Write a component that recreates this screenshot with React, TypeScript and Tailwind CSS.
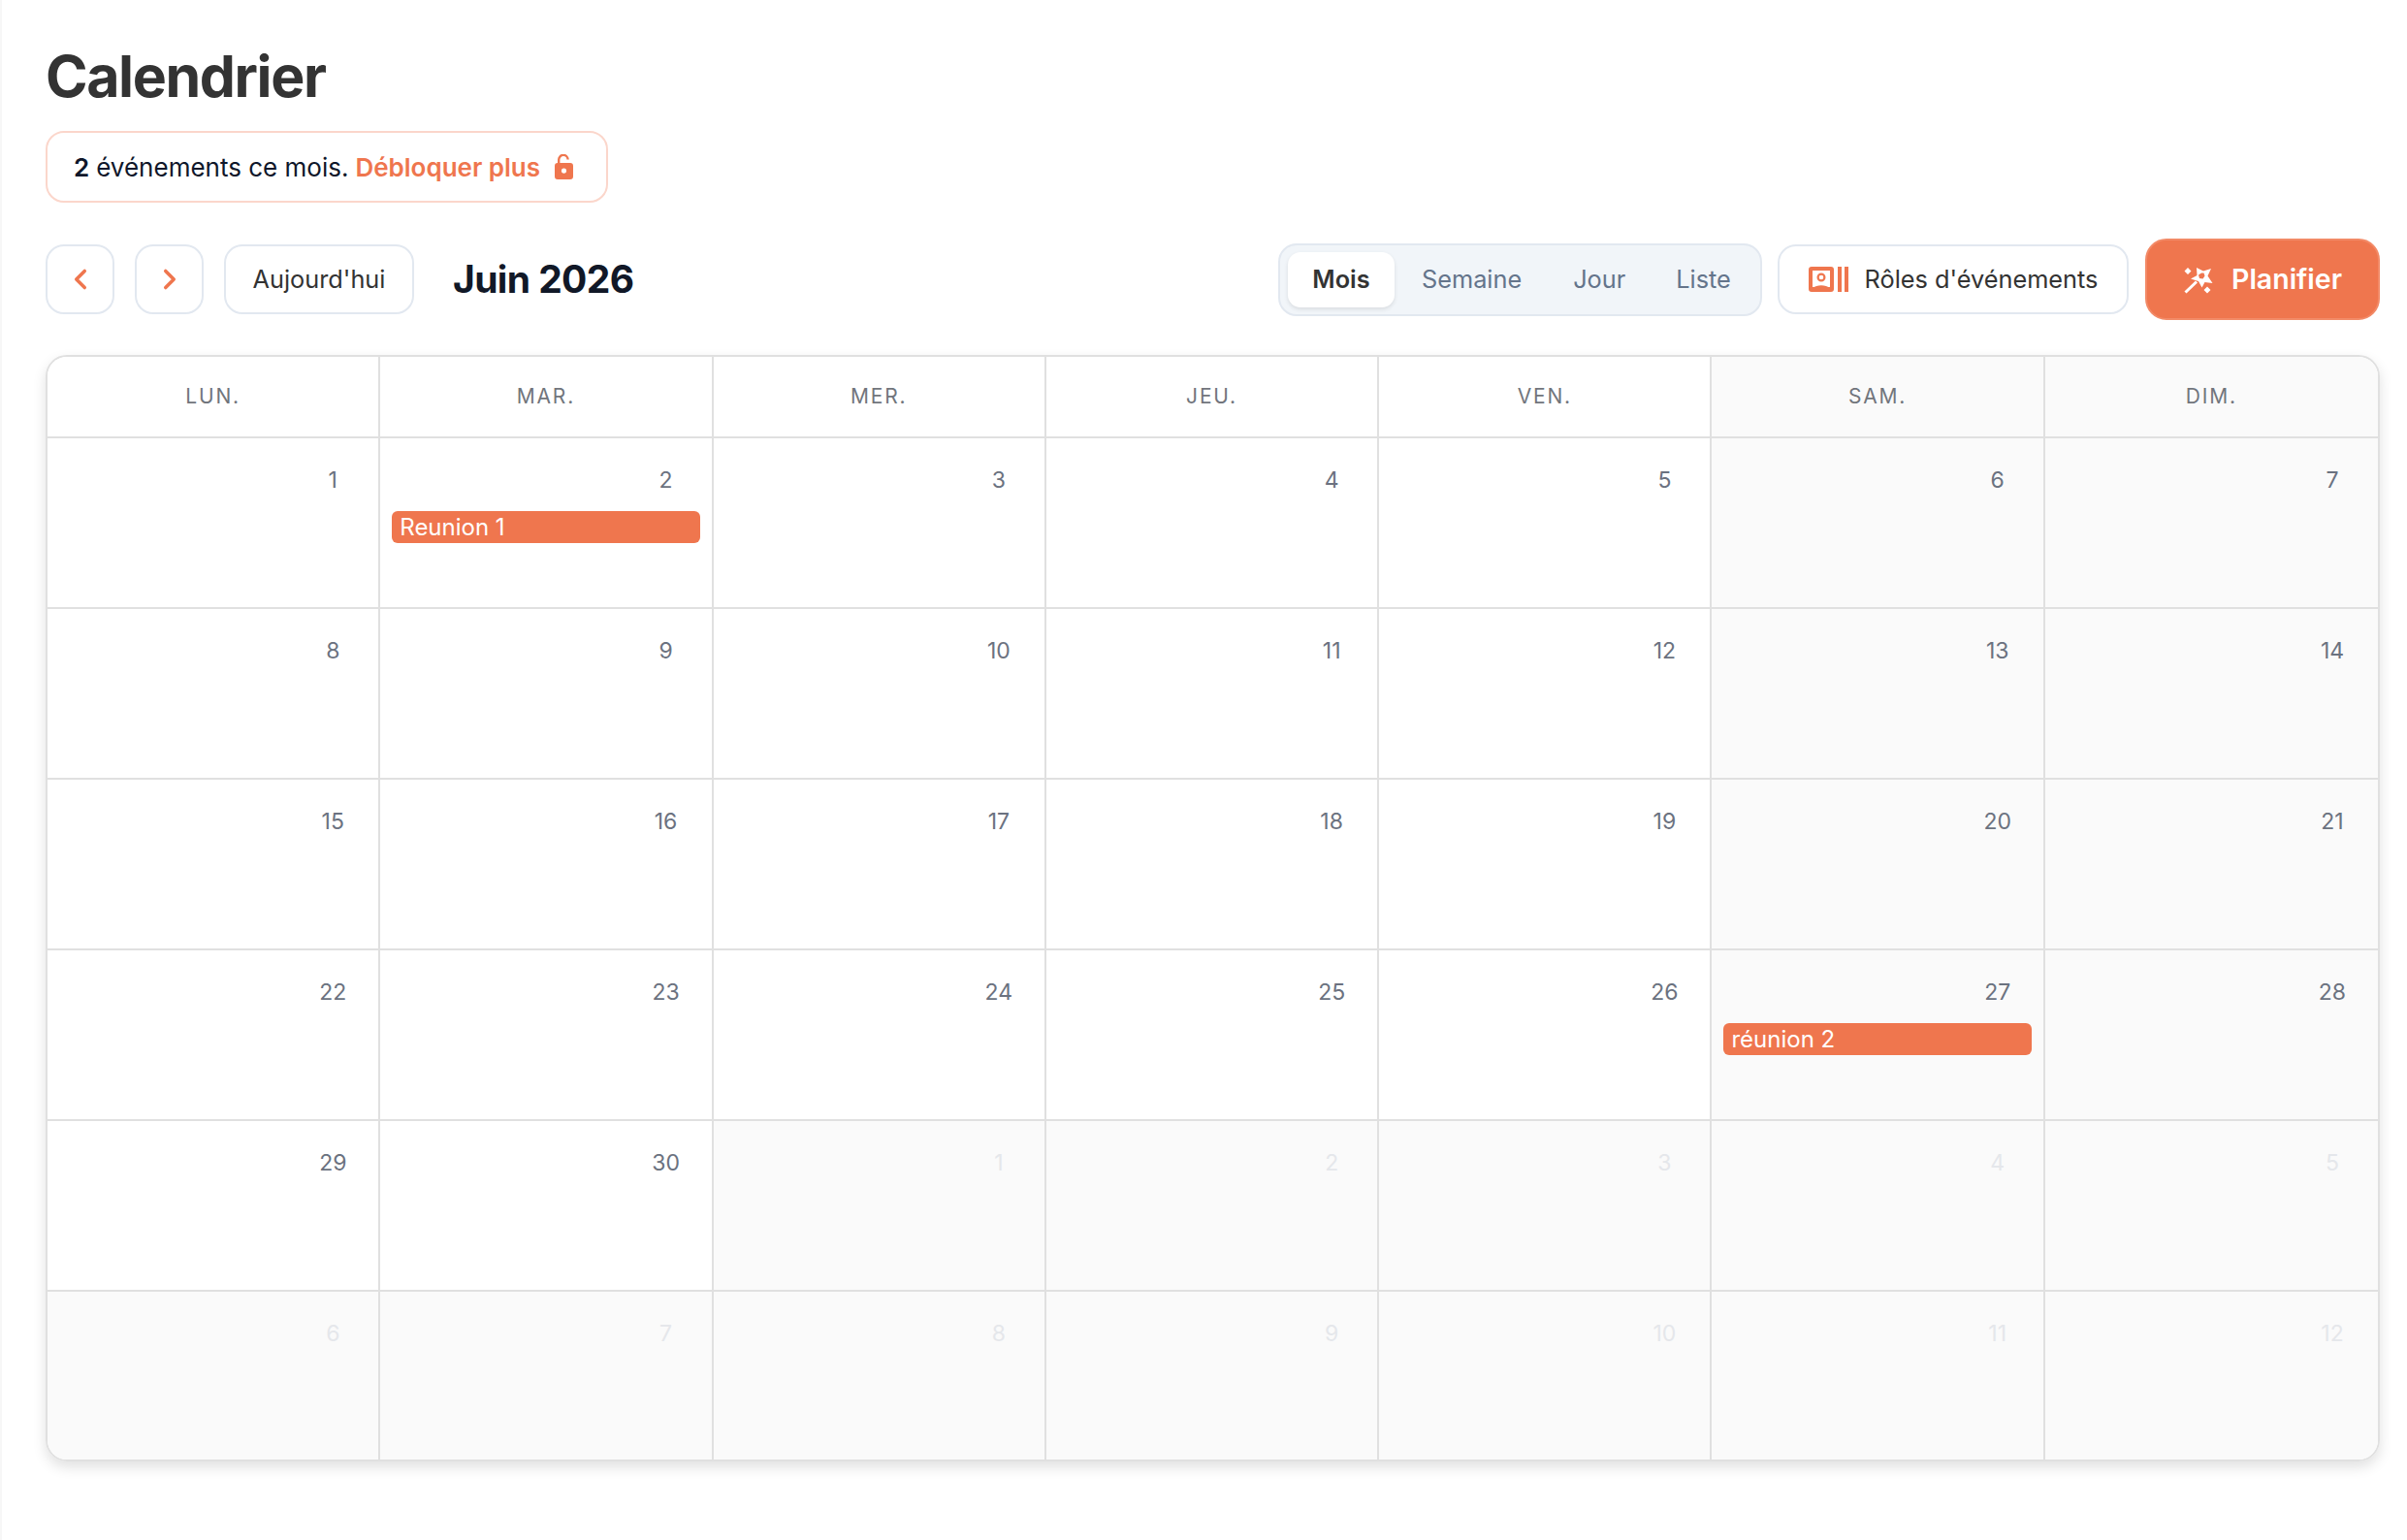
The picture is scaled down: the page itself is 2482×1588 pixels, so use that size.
import { LuChevronLeft, LuChevronRight } from "react-icons/lu";

const headers = ["LUN.", "MAR.", "MER.", "JEU.", "VEN.", "SAM.", "DIM."];
type Cell = { d: number; other?: boolean; ev?: string };
const cells: Cell[] = [
  ...Array.from({ length: 30 }, (_, i) => ({ d: i + 1 } as Cell)),
  ...Array.from({ length: 12 }, (_, i) => ({ d: i + 1, other: true } as Cell)),
];
cells[1].ev = "Reunion 1";
cells[26].ev = "réunion 2";

function LockOpenIcon() {
  return (
    <svg width="19" height="26" viewBox="0 0 19 26" className="ml-[15px] shrink-0">
      <path d="M4.2 10V5.6a4.7 4.7 0 0 1 9.4 0" fill="none" stroke="#ef764e" strokeWidth="2.4" />
      <path
        fillRule="evenodd"
        fill="#ef764e"
        d="M3 9h13a3 3 0 0 1 3 3v11a3 3 0 0 1-3 3H3a3 3 0 0 1-3-3V12a3 3 0 0 1 3-3zm6.500 5.500a2.600 2.600 0 1 0 0 5.200 2.600 2.600 0 0 0 0-5.200z"
      />
    </svg>
  );
}

function RolesIcon() {
  return (
    <svg width="41" height="26" viewBox="10 9 41 26" className="shrink-0">
      <rect x="10" y="9" width="26" height="26" rx="3" fill="#ef764e" />
      <rect x="14" y="13" width="18" height="17" fill="#ffffff" />
      <circle cx="23" cy="20" r="3.400" fill="none" stroke="#ef764e" strokeWidth="2.200" />
      <path d="M15 31c2-3.600 14-3.600 16 0z" fill="#ef764e" />
      <rect x="40" y="9" width="4" height="26" fill="#ef764e" />
      <rect x="47" y="9" width="4" height="26" fill="#ef764e" />
    </svg>
  );
}

function WandIcon() {
  return (
    <svg width="32" height="30" viewBox="12 10 32 30" className="shrink-0">
      <path
        fill="#ffffff"
        fillRule="evenodd"
        d="M26 13l7 3.500 8-2.500-3.500 7.500 5 7.500-8-1-3 5.500-3.500-6.500-8-2.500 6.500-3.500zM31 18.500l-3 2 1 3.500 3.500.5 2-3-1-3z"
      />
      <path d="M14.500 38.500L26 27.500" stroke="#ffffff" strokeWidth="3" fill="none" />
      <path d="M17 13l3.500 3.500-3.500 3.500-3.500-3.500zM37 32.500l3.500 3.500-3.500 3.500-3.500-3.500z" fill="#ffffff" />
    </svg>
  );
}

export default function App() {
  return (
    <div className="min-h-[1588px] border-l-2 border-[#f7f7f7] bg-white pt-[54px] pr-[28px] pb-[70px] pl-[45px] font-['Inter',sans-serif] text-[#0f172a]">
      <h1 className="text-[59px] leading-[50px] font-bold tracking-[-1.400px] text-[#333333]">Calendrier</h1>
      <div className="mt-[31px] flex h-[74px] w-[580px] items-center rounded-[19px] border-2 border-[#fbd6cb] pl-[27px] text-[26px]">
        <span className="font-semibold">2</span>
        <span className="ml-[7px]">événements ce mois.</span>
        <span className="ml-[7px] font-semibold text-[#ef764e]">Débloquer plus</span>
        <LockOpenIcon />
      </div>
      <div className="mt-[37px] flex h-[84px] items-center">
        <button className="flex h-[72px] w-[71px] items-center justify-center rounded-[19px] border-2 border-[#e2e8f0] bg-white text-[#ef764e]">
          <LuChevronLeft size={34} strokeWidth={2.500} />
        </button>
        <button className="ml-[21px] flex h-[72px] w-[71px] items-center justify-center rounded-[19px] border-2 border-[#e2e8f0] bg-white text-[#ef764e]">
          <LuChevronRight size={34} strokeWidth={2.500} />
        </button>
        <button className="ml-[21px] flex h-[72px] w-[196px] items-center justify-center rounded-[19px] border-2 border-[#e2e8f0] bg-white text-[25.300px] text-[#333333]">
          Aujourd'hui
        </button>
        <div className="ml-[40px] text-[39px] font-bold tracking-[-0.600px] text-[#111827]">Juin 2026</div>
        <div className="ml-auto flex h-[75px] w-[499px] items-center rounded-[19px] border-2 border-[#e2e8f0] bg-[#f1f5f9] pl-[8px] text-[25.300px] text-[#64748b]">
          <div className="flex h-[57px] w-[110px] items-center justify-center rounded-[13px] bg-white font-semibold text-[#333333] shadow-[0_2px_4px_rgba(0,0,0,0.1)]">Mois</div>
          <span className="ml-[28px]">Semaine</span>
          <span className="ml-[53px]">Jour</span>
          <span className="ml-[52px]">Liste</span>
        </div>
        <button className="ml-[16px] flex h-[72px] w-[362px] items-center justify-center gap-[17px] rounded-[19px] border-2 border-[#e2e8f0] bg-white text-[25.300px] text-[#333333]">
          <RolesIcon />
          Rôles d'événements
        </button>
        <button className="ml-[17px] flex h-[84px] w-[242px] items-center justify-center gap-[18px] rounded-[22px] border-2 border-[#f28a67] bg-[#ef764e] text-[28.500px] font-semibold text-white">
          <WandIcon />
          Planifier
        </button>
      </div>
      <div className="mt-[36px] grid h-[1141px] grid-cols-7 grid-rows-[84px_repeat(5,176px)_173px] overflow-hidden rounded-[22px] border-2 border-[#e0e0e0] shadow-[0_6px_14px_rgba(0,0,0,0.12)]">
        {headers.map((h, i) => (
          <div
            key={h}
            className={`flex items-center justify-center border-b-2 border-[#e0e0e0] text-[21px] tracking-[1.800px] text-[#71757c] ${i < 6 ? "border-r-2" : ""} ${i >= 5 ? "bg-[#fafafa]" : "bg-white"}`}
          >
            {h}
          </div>
        ))}
        {cells.map((c, i) => {
          const col = i % 7;
          const shaded = c.other || col >= 5;
          return (
            <div
              key={i}
              className={`flex flex-col border-[#e0e0e0] ${col < 6 ? "border-r-2" : ""} ${i < 35 ? "border-b-2" : ""} ${shaded ? "bg-[#fafafa]" : "bg-white"}`}
            >
              <div className="mt-[29px] flex h-[28px] justify-end pr-[27px]">
                <div className={`w-[40px] text-center text-[23px] leading-[28px] ${c.other ? "text-[#e5e7eb]" : "text-[#6b7280]"}`}>
                  {c.d}
                </div>
              </div>
              {c.ev && (
                <div className="mx-[12px] mt-[18px] flex h-[33px] items-center rounded-[6px] bg-[#ef764e] pl-[8px] text-[24px] text-white">
                  {c.ev}
                </div>
              )}
            </div>
          );
        })}
      </div>
    </div>
  );
}
